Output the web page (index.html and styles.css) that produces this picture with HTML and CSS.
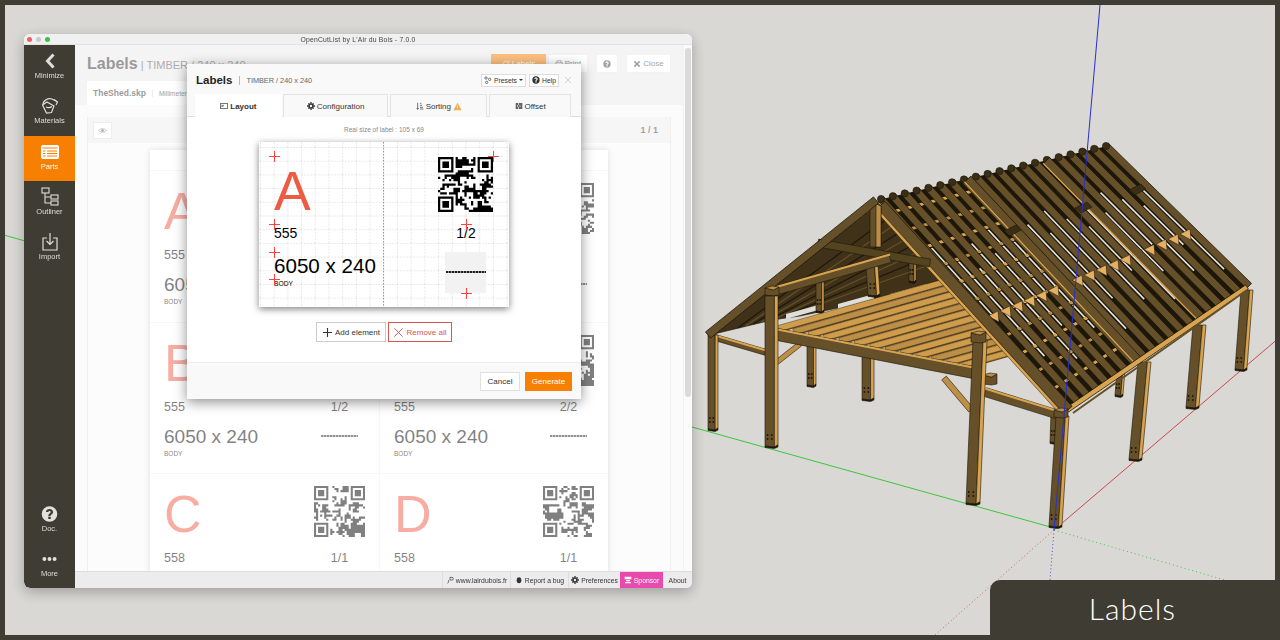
FILE: index.html
```html
<!DOCTYPE html>
<html>
<head>
	<meta charset="utf-8">
	<title>OpenCutList - Labels</title>
	<link rel="stylesheet" href="styles.css">
</head>
<body>
<svg class="sprite" width="0" height="0">
	<symbol id="i-gear" viewBox="0 0 12 12"><path d="M6 1.800a4.200 4.200 0 1 0 0 8.400 4.200 4.200 0 0 0 0-8.400zm0 2.400a1.800 1.800 0 1 1 0 3.600 1.800 1.800 0 0 1 0-3.600z"/><path d="M5 0h2v2.200H5zM5 9.800h2V12H5zM0 5h2.200v2H0zM9.800 5H12v2H9.800zM1.400 2.800l1.400-1.400 1.500 1.500-1.400 1.400zM7.700 9.100l1.400-1.400 1.500 1.500-1.400 1.400zM1.400 9.200l1.500-1.500 1.400 1.400-1.500 1.500zM7.700 2.900l1.500-1.500 1.400 1.400-1.500 1.500z"/></symbol>
	<symbol id="i-help" viewBox="0 0 12 12"><path fill-rule="evenodd" d="M6 .5a5.500 5.500 0 1 0 0 11 5.500 5.500 0 0 0 0-11zM5.100 8h1.800v1.600H5.100zM3.500 4.600C3.500 3.200 4.600 2.400 6 2.400s2.500.8 2.500 2.100c0 1.800-1.700 1.700-1.700 2.900H5.200c0-1.900 1.600-2 1.600-2.900 0-.4-.3-.7-.8-.7s-.8.3-.8.800z"/></symbol>
	<symbol id="i-close" viewBox="0 0 12 12"><path d="M2 2l8 8M10 2l-8 8" fill="none" stroke="currentColor" stroke-width="2.400"/></symbol>
	<symbol id="i-plus" viewBox="0 0 12 12"><path d="M6 1v10M1 6h10" fill="none" stroke="currentColor" stroke-width="1.200"/></symbol>
	<symbol id="i-cross" viewBox="0 0 12 12"><path d="M1.500 1.500l9 9M10.500 1.500l-9 9" fill="none" stroke="currentColor"/></symbol>
</svg>

<div class="stage">
	<svg id="model" class="model" viewBox="0 0 1280 640"></svg>

	<div class="window">
		<div class="titlebar">
			<span class="light red"></span><span class="light grey"></span><span class="light green"></span>
			<span class="title-text">OpenCutList by L'Air du Bois - 7.0.0</span>
		</div>
		<div class="win-body">
			<div class="sidebar">
				<div class="side-btn">
					<svg viewBox="0 0 20 20"><path d="M13.500 3.500l-6 6.500 6 6.500" fill="none" stroke="currentColor" stroke-width="3"/></svg>
					<span>Minimize</span>
				</div>
				<div class="side-btn">
					<svg viewBox="0 0 20 20" fill="none" stroke="currentColor" stroke-width="1.200"><path d="M2.500 9l4.500-3 7 4-2.500 6.500-5 .5z"/><path d="M3 8.500C3 4.500 8 1.500 12 3l4 2"/><path d="M14 3.500L17.500 6l-1.500 3"/><path d="M6 11c2 1 4 1 6-.5"/></svg>
					<span>Materials</span>
				</div>
				<div class="side-btn active">
					<svg viewBox="0 0 20 20"><rect x="1" y="3" width="18" height="14" rx="2" fill="#fff"/><path d="M2.500 6h15M7 9h10M7 11.500h10M7 14h10M3 9h2.500M3 11.500h2.500M3 14h2.500" stroke="#f77f00"/></svg>
					<span>Parts</span>
				</div>
				<div class="side-btn">
					<svg viewBox="0 0 20 20" fill="none" stroke="currentColor" stroke-width="1.100"><rect x="2" y="1" width="7" height="5"/><rect x="11" y="8" width="7" height="4"/><rect x="11" y="14" width="7" height="4"/><path d="M5 6v10h6M5 10h6"/></svg>
					<span>Outliner</span>
				</div>
				<div class="side-btn">
					<svg viewBox="0 0 20 20" fill="none" stroke="currentColor" stroke-width="1.200"><path d="M7 6H3v12h14V6h-4"/><path d="M10 1v11M6.500 9l3.500 3.500L13.500 9"/></svg>
					<span>Import</span>
				</div>
				<div class="side-btn push">
					<svg viewBox="0 0 12 12" class="fill"><use href="#i-help"/></svg>
					<span>Doc.</span>
				</div>
				<div class="side-btn">
					<svg viewBox="0 0 20 20" class="fill"><circle cx="4" cy="10" r="2.300"/><circle cx="10" cy="10" r="2.300"/><circle cx="16" cy="10" r="2.300"/></svg>
					<span>More</span>
				</div>
			</div>

			<div class="right">
				<div class="main">
					<div class="page">
						<div class="head">
							<div class="head-row">
								<div class="head-title"><b>Labels</b> | TIMBER / 240 x 240</div>
								<div class="head-btns">
									<span class="hbtn orange"><svg class="ico line" viewBox="0 0 12 12"><path d="M10 4a4.500 4.500 0 1 0 .5 3M10.500 1v3.500H7"/></svg>Labels</span>
									<span class="hbtn print"><svg class="ico line" viewBox="0 0 12 12"><path d="M3 4V1h6v3M1 4h10v5H9M3 9H1V4M3 7h6v4H3z"/></svg>Print</span>
									<span class="hbtn help gap"><svg class="ico"><use href="#i-help"/></svg></span>
									<span class="hbtn close gap"><svg class="ico"><use href="#i-close"/></svg>Close</span>
								</div>
							</div>
							<div class="file-tab"><b>TheShed.skp</b><i></i><span>Millimeter</span></div>
						</div>
						<div class="panel">
							<div class="panel-bar">
								<span class="eye"><svg viewBox="0 0 12 12"><path d="M1 6c2-3 8-3 10 0-2 3-8 3-10 0z" fill="none" stroke="#555"/><circle cx="6" cy="6" r="1.700" fill="#555"/></svg></span>
								<b>1 / 1</b>
							</div>
							<div class="panel-body">
								<div class="sheet">
									<div class="cell">
										<div class="letter">A</div><svg class="qr" data-seed="11"></svg>
										<div class="num">555</div><div class="frac">1/2</div>
										<div class="size">6050 x 240</div><div class="bar"></div>
										<div class="tag">BODY</div>
									</div>
									<div class="cell">
										<div class="letter">A</div><svg class="qr" data-seed="23"></svg>
										<div class="num">555</div><div class="frac">2/2</div>
										<div class="size">6050 x 240</div><div class="bar"></div>
										<div class="tag">BODY</div>
									</div>
									<div class="cell">
										<div class="letter">B</div><svg class="qr" data-seed="37"></svg>
										<div class="num">555</div><div class="frac">1/2</div>
										<div class="size">6050 x 240</div><div class="bar"></div>
										<div class="tag">BODY</div>
									</div>
									<div class="cell">
										<div class="letter">B</div><svg class="qr" data-seed="41"></svg>
										<div class="num">555</div><div class="frac">2/2</div>
										<div class="size">6050 x 240</div><div class="bar"></div>
										<div class="tag">BODY</div>
									</div>
									<div class="cell">
										<div class="letter">C</div><svg class="qr" data-seed="53"></svg>
										<div class="num">558</div><div class="frac">1/1</div>
									</div>
									<div class="cell">
										<div class="letter">D</div><svg class="qr" data-seed="67"></svg>
										<div class="num">558</div><div class="frac">1/1</div>
									</div>
								</div>
							</div>
						</div>
					</div>
					<div class="scrollbar"><div class="thumb"></div></div>
					<div class="backdrop"></div>

					<div class="modal">
						<div class="modal-head">
							<b>Labels</b><i></i><span class="modal-sub">TIMBER / 240 x 240</span>
							<span class="mbtn presets">
								<svg class="ico line" viewBox="0 0 12 12"><circle cx="3" cy="3" r="1.800"/><circle cx="8.500" cy="5" r="1.800"/><circle cx="4" cy="9.500" r="1.800"/></svg>Presets <em></em>
							</span>
							<span class="mbtn"><svg class="ico"><use href="#i-help"/></svg>Help</span>
							<svg class="modal-x"><use href="#i-cross"/></svg>
						</div>
						<div class="tabs">
							<div class="tab active tab-layout">
								<svg class="ico line" viewBox="0 0 12 12"><rect x=".5" y="2.500" width="11" height="7"/><path d="M2 5h4M2 7h3"/></svg>Layout
							</div>
							<div class="tab tab-config"><svg class="ico"><use href="#i-gear"/></svg>Configuration</div>
							<div class="tab tab-sort">
								<svg class="ico line" viewBox="0 0 12 12"><path d="M2.500 1v10M1 9l1.500 2L4 9M6 2h2M6 5h3M6 8h4.500M6 10.500h5"/></svg>Sorting
								<svg class="warn" viewBox="0 0 12 12"><path d="M6 1l5.500 10H.5z" fill="#f0ad4e"/><path d="M6 4.500v3.500M6 9v1" stroke="#fff"/></svg>
							</div>
							<div class="tab tab-offset">
								<svg class="ico" viewBox="0 0 12 12"><path d="M1 2h4v2.200H1zM6 2h5v2.200H6zM1 5h2.500v2.200H1zM4.500 5h2.500v2.200H4.500zM8 5h3v2.200H8zM1 8h4v2.200H1zM6 8h5v2.200H6z"/></svg>Offset
							</div>
						</div>
						<div class="modal-body">
							<div class="real-size">Real size of label : 105 x 69</div>
							<div class="label">
								<svg class="label-grid" width="250" height="165">
									<defs>
										<pattern id="grid" x="1" y="5" width="13.700" height="13.700" patternUnits="userSpaceOnUse">
											<path d="M.5 0v13.700M0 .5h13.700" fill="none" stroke="#e4e4e4" stroke-dasharray="1.500 1.500"/>
										</pattern>
									</defs>
									<rect width="250" height="165" fill="url(#grid)"/>
									<path d="M124.500 0v165" stroke="#999" stroke-dasharray="1.500 1.500"/>
								</svg>
								<div class="l-box"></div>
								<div class="l-bar"></div>
								<div class="l-letter">A</div>
								<svg class="qr l-qr" data-seed="79"></svg>
								<div class="l-num">555</div>
								<div class="l-frac">1/2</div>
								<div class="l-size">6050 x 240</div>
								<div class="l-tag">BODY</div>
								<i class="cross c1"></i><i class="cross c2"></i><i class="cross c3"></i><i class="cross c4"></i>
								<i class="cross c5"></i><i class="cross c6"></i><i class="cross c7"></i>
							</div>
							<div class="elem-btns">
								<span class="ebtn"><svg class="ico-lg"><use href="#i-plus"/></svg>Add element</span>
								<span class="ebtn danger"><svg class="ico-lg"><use href="#i-cross"/></svg>Remove all</span>
							</div>
						</div>
						<div class="modal-foot">
							<span class="fbtn">Cancel</span>
							<span class="fbtn primary">Generate</span>
						</div>
					</div>
				</div>

				<div class="statusbar">
					<span class="st-item"><svg class="ico line" viewBox="0 0 12 12"><path d="M2 10.500c1.500 0 2-1 2-3V6M6 2h3a1.500 1.500 0 0 1 0 4H6z"/></svg>www.lairdubois.fr</span>
					<span class="st-item"><svg class="ico" viewBox="0 0 12 12"><ellipse cx="6" cy="6.500" rx="3.500" ry="4.500"/></svg>Report a bug</span>
					<span class="st-item"><svg class="ico"><use href="#i-gear"/></svg>Preferences</span>
					<span class="st-item sponsor"><svg class="ico" viewBox="0 0 12 12" fill="#fff"><path d="M1 1h10v4H1zM3 6h6v2H3zM1.500 9h9v2h-9z"/></svg>Sponsor</span>
					<span class="st-item about">About</span>
				</div>
			</div>
		</div>
	</div>

	<div class="badge">Labels</div>
</div>
<script src="page.js"></script>
</body>
</html>
```

FILE: styles.css
```css
* {margin:0; padding:0; box-sizing:border-box;}
body {font-family:"Liberation Sans", Arial, sans-serif; color:#222; background:#3f3c34;}
b {font-weight:bold;}
i, em {font-style:normal;}
.sprite {position:absolute;}

.stage {width:1280px; height:640px; position:relative; overflow:hidden; background:#d9d8d4; border:5px solid #3f3c34;}
.model {position:absolute; left:-5px; top:-5px; width:1280px; height:640px;}
.badge {position:absolute; right:0; bottom:0; width:285px; height:55px; background:#3f3c34; border-top-left-radius:10px; color:#fff; font-family:Lato, sans-serif; font-weight:300; font-size:30px; letter-spacing:1px; display:flex; align-items:center; justify-content:center;}

/* window */
.window {position:absolute; left:19px; top:29px; width:668px; height:554px; display:flex; flex-direction:column; border-radius:6px; overflow:hidden; background:#fff; box-shadow:0 4px 14px rgba(0,0,0,.28); opacity:.999;}
.titlebar {height:11px; flex:none; background:#f1f0f1; display:flex; align-items:center; padding-left:3px; gap:4px; position:relative; border-bottom:1px solid #e2e2e2;}
.light {width:5px; height:5px; border-radius:50%;}
.light.red {background:#f2605a;}
.light.grey {background:#c9c9c9;}
.light.green {background:#2fc64a;}
.title-text {position:absolute; left:0; right:0; text-align:center; font-size:6.800px; color:#444; letter-spacing:.2px;}
.win-body {flex:1; display:flex; min-height:0;}

.sidebar {width:51px; flex:none; background:#3f3c34; display:flex; flex-direction:column; border-bottom-left-radius:6px;}
.side-btn {height:45px; flex:none; padding-top:6px; display:flex; flex-direction:column; align-items:center; color:#dfddd8; font-size:7.500px; line-height:10px;}
.side-btn svg {width:20px; height:20px;}
.side-btn svg.fill {fill:#e3e1dc; width:17px; height:20px;}
.side-btn.active {background:#f77f00; color:#fff;}
.side-btn:nth-child(3) {margin-top:1px;}
.side-btn.push {margin-top:auto;}

.right {flex:1; min-width:0; display:flex; flex-direction:column;}
.main {flex:1; min-height:0; display:flex; position:relative; overflow:hidden;}
.page {flex:1; min-width:0; background:#f7f7f7; display:flex; flex-direction:column;}
.scrollbar {width:9px; flex:none; background:#f6f6f6; border-left:1px solid #e2e2e2; padding:3px 1px;}
.thumb {height:349px; background:#b5b5b5; border-radius:4px;}
.backdrop {position:absolute; left:0; top:0; right:0; bottom:0; background:rgba(255,255,255,.5);}

.head {height:60px; flex:none; background:#ebe8e8; padding:9px 12px 0;}
.head-row {display:flex; justify-content:space-between; height:19px; align-items:center;}
.head-title {font-size:11px; color:#555; white-space:nowrap;}
.head-title b {font-size:16px; color:#333;}
.head-btns {display:flex;}
.hbtn {height:19px; background:#fff; border:1px solid #e4e4e4; font-size:8px; color:#444; display:flex; align-items:center; justify-content:center; gap:2px; margin-left:2px;}
.hbtn.orange {width:55px; background:#f77f00; border-color:#f77f00; color:#fff;}
.hbtn.print {width:40px;}
.hbtn.help {width:22px;}
.hbtn.close {width:45px;}
.hbtn.gap {margin-left:8px;}
.ico {width:8px; height:8px; fill:currentColor; flex:none;}
.ico.line {fill:none; stroke:currentColor;}
.ico-lg {width:11px; height:11px; flex:none;}
.file-tab {height:24px; margin-top:8px; width:240px; background:#fff; display:flex; align-items:center; padding-left:6px;}
.file-tab b {font-size:8.500px; color:#333;}
.file-tab i {width:1px; height:8px; background:#ddd; margin:0 6px;}
.file-tab span {font-size:6.500px; color:#333;}

.panel {flex:1; min-height:0; margin:12px 12px 0; display:flex; flex-direction:column; border-left:1px solid #dedede; border-right:1px solid #dedede;}
.panel-bar {height:26px; flex:none; background:#ececec; display:flex; align-items:center; justify-content:space-between; padding:0 12px 0 5px; font-size:9px; color:#444;}
.eye {width:19px; height:17px; background:#fff; border:1px solid #dcdcdc; display:flex; align-items:center; justify-content:center;}
.eye svg {width:9px; height:9px;}
.panel-body {flex:1; min-height:0; overflow:hidden; display:flex; justify-content:center; padding-top:7px; background:#f9f9f9;}
.sheet {width:458px; height:600px; background:#fff; padding-top:20px; box-shadow:0 0 6px rgba(0,0,0,.25); display:grid; grid-template-columns:230px 228px; grid-auto-rows:151.500px;}
.cell {border-top:1px solid #eee; padding:12px 14px 0; display:grid; grid-template-columns:1fr 51px; grid-template-rows:51px 29px 35px 10px; color:#000; align-content:start;}
.cell:nth-child(odd) {border-right:1px solid #eee;}
.letter {font-size:52px; line-height:51px; color:#ee5b45; align-self:end; position:relative; top:3px;}
.qr {width:51px; height:51px; fill:currentColor; display:block;}
.num {font-size:12.500px; line-height:16px; margin-top:13px;}
.frac {font-size:12.500px; line-height:16px; margin-top:13px; text-align:center;}
.size {font-size:19px; line-height:26px; margin-top:9px; white-space:nowrap;}
.bar {height:2px; width:37px; margin:20px 0 0 7px; background:repeating-linear-gradient(90deg,#222 0 2px,#999 2px 3px);}
.tag {font-size:6.500px; line-height:8px; grid-column:1 / 3;}

/* modal */
.modal {position:absolute; left:112px; top:19px; width:394px; height:335px; background:#fff; display:flex; flex-direction:column; box-shadow:0 3px 12px rgba(0,0,0,.45);}
.modal-head {height:30px; flex:none; background:#f9f9f9; display:flex; align-items:center; padding:2px 9px 0; font-size:6.800px; color:#333;}
.modal-head b {font-size:11.500px; color:#222;}
.modal-head i {width:1px; height:9px; background:#bbb; margin:0 6px 0 7px;}
.modal-sub {font-size:7.300px; color:#666; margin-right:auto;}
.mbtn {height:13px; background:#fff; border:1px solid #ddd; display:flex; align-items:center; gap:2px; padding:0 2px; margin-left:3px;}
.mbtn em {width:0; height:0; border:2.500px solid transparent; border-top-color:#333; border-bottom:0;}
.modal-x {width:8px; height:8px; color:#bbb; margin-left:5px;}
.tabs {height:23px; flex:none; background:#f9f9f9; display:flex; padding:0 10px 0 8px; gap:1px; border-bottom:1px solid #ddd;}
.tab {height:23px; background:#f9f9f9; border:1px solid #e4e4e4; border-bottom:0; font-size:8px; color:#333; display:flex; align-items:center; justify-content:center; gap:2px;}
.tab.active {background:#fff; font-weight:bold; height:24px; border:0;}
.tab-layout {width:87px;}
.tab-config {width:106px;}
.tab-sort {width:97px; margin-left:1px;}
.tab-offset {width:82px; margin-left:1px;}
.warn {width:9px; height:9px;}
.modal-body {flex:1; padding-top:8px; display:flex; flex-direction:column; align-items:center;}
.real-size {font-size:6.500px; line-height:10px; color:#888;}
.label {width:250px; height:165px; margin-top:7px; background:#fff; position:relative; box-shadow:0 2px 7px rgba(0,0,0,.5);}
.label-grid {position:absolute; left:0; top:0;}
.l-box {position:absolute; left:186px; top:110px; width:41px; height:41px; background:#f2f2f2;}
.l-bar {position:absolute; left:187px; top:129px; width:40px; height:2px; background:repeating-linear-gradient(90deg,#222 0 2px,#888 2px 3px);}
.l-letter {position:absolute; left:15px; top:19px; font-size:55px; line-height:60px; color:#ee5b45;}
.l-qr {position:absolute; left:179px; top:15px; width:55px; height:55px; color:#000;}
.l-num {position:absolute; left:15px; top:83px; font-size:14px; line-height:16px; color:#000;}
.l-frac {position:absolute; left:187px; width:40px; text-align:center; top:83px; font-size:14px; line-height:16px; color:#000;}
.l-size {position:absolute; left:15px; top:111px; font-size:20.600px; line-height:26px; color:#000; white-space:nowrap;}
.l-tag {position:absolute; left:15px; top:138px; font-size:6.700px; line-height:8px; color:#000;}
.cross {position:absolute; width:11px; height:11px; background:linear-gradient(#f44,#f44) center/100% 1px no-repeat, linear-gradient(#f44,#f44) center/1px 100% no-repeat;}
.c1 {left:10px; top:9px;}
.c2 {left:10px; top:77px;}
.c3 {left:10px; top:105px;}
.c4 {left:10px; top:132px;}
.c5 {left:229px; top:9px;}
.c6 {left:202px; top:77px;}
.c7 {left:202px; top:146px;}
.elem-btns {margin-top:15px; display:flex; gap:2px;}
.ebtn {height:20px; width:70px; border:1px solid #ccc; background:#fff; font-size:8px; display:flex; align-items:center; justify-content:center; gap:2px; color:#333;}
.ebtn.danger {width:64px; border-color:#d9534f; color:#d9534f;}
.modal-foot {height:37px; flex:none; background:#f9f9f9; border-top:1px solid #eee; display:flex; justify-content:flex-end; align-items:center; padding:0 9px 0 0; gap:5px;}
.fbtn {height:19px; width:40px; background:#fff; border:1px solid #e0e0e0; font-size:8px; color:#333; display:flex; align-items:center; justify-content:center;}
.fbtn.primary {width:47px; background:#f77f00; border-color:#f77f00; color:#fff;}

/* status bar */
.statusbar {height:17px; flex:none; background:#ececec; border-top:1px solid #ddd; display:flex; justify-content:flex-end; font-size:6.800px; color:#333;}
.st-item {display:flex; align-items:center; justify-content:center; gap:2px; border-left:1px solid #ddd;}
.st-item:nth-child(1) {width:68px;}
.st-item:nth-child(2) {width:58px;}
.st-item:nth-child(3) {width:52px;}
.st-item.sponsor {width:43px; background:#e84aad; color:#fff; border:0;}
.st-item.about {width:29px; border:0;}
```

FILE: page.js
```js
// qr codes: finder squares + seeded noise
function fillQr(svg) {
	var n = 25, seed = +svg.dataset.seed, d = "", grid = [];
	function rnd() {
		seed = (seed * 1103515245 + 12345) & 0x7fffffff;
		return (seed >> 12) & 1;
	}
	function finder(x, y, i, j) {
		var a = i - x, b = j - y;
		if (a < -1 || b < -1 || a > 7 || b > 7) return -1;
		if (a < 0 || b < 0 || a > 6 || b > 6) return 0;
		if (a == 0 || b == 0 || a == 6 || b == 6) return 1;
		if (a == 1 || b == 1 || a == 5 || b == 5) return 0;
		return 1;
	}
	for (var j = 0; j < n; j++) {
		for (var i = 0; i < n; i++) {
			var v = finder(0, 0, i, j);
			if (v < 0) v = finder(18, 0, i, j);
			if (v < 0) v = finder(0, 18, i, j);
			if (v < 0) {
				// clump the modules a bit, left or above
				if (rnd() && i > 0 && j > 0) v = rnd() ? grid[j * n + i - 1] : grid[(j - 1) * n + i];
				else v = rnd();
			}
			grid[j * n + i] = v;
			if (v) d += "M" + i + " " + j + "h1.02v1.02h-1.02z";
		}
	}
	svg.setAttribute("viewBox", "0 0 25 25");
	svg.innerHTML = '<path d="' + d + '"/>';
}
Array.from(document.querySelectorAll(".qr")).forEach(fillQr);

// timber frame, coordinates are page pixels
var out = "";
var BROWN = "#655029", DARK = "#1d170a", ORANGE = "#d9a450", MID = "#bd8e45", SHADE = "#3f3219";

function lerp(a, b, t) { return [a[0] + (b[0] - a[0]) * t, a[1] + (b[1] - a[1]) * t]; }
function poly(pts, fill, sw) {
	out += '<polygon points="' + pts.map(function (p) { return p[0].toFixed(1) + "," + p[1].toFixed(1); }).join(" ") +
		'" fill="' + fill + '" stroke="' + DARK + '" stroke-width="' + (sw === undefined ? 0.6 : sw) + '"/>';
}
function band(a, b, w, fill, sw) {
	var dx = b[0] - a[0], dy = b[1] - a[1], l = Math.sqrt(dx * dx + dy * dy);
	var nx = -dy / l * w / 2, ny = dx / l * w / 2;
	poly([[a[0] + nx, a[1] + ny], [b[0] + nx, b[1] + ny], [b[0] - nx, b[1] - ny], [a[0] - nx, a[1] - ny]], fill, sw);
}
function line(a, b, color, w, dash) {
	out += '<line x1="' + a[0] + '" y1="' + a[1] + '" x2="' + b[0] + '" y2="' + b[1] + '" stroke="' + color +
		'" stroke-width="' + w + '"' + (dash ? ' stroke-dasharray="' + dash + '"' : "") + "/>";
}
function post(x1, y1, x2, y2, w) {
	var s = w * 0.72;
	poly([[x1, y1], [x1 + s, y1], [x2 + s, y2], [x2, y2 - 1]], BROWN);
	poly([[x1 + s, y1], [x1 + w, y1], [x2 + w, y2 - 2], [x2 + s, y2]], ORANGE);
	poly([[x2, y2 - 1], [x2 + s, y2], [x2 + w, y2 - 2], [x2 + w, y2], [x2 + s, y2 + 1.5], [x2, y2 + 0.5]], DARK);
	[[1.5, -12], [4, -12], [1.5, -8], [4, -8]].forEach(function (h) {
		out += '<circle cx="' + (x2 + h[0] * s / 5.5) + '" cy="' + (y2 + h[1]) + '" r=".9" fill="' + DARK + '"/>';
	});
}
function beam(a, b, w, lit) {
	band(a, b, w, BROWN);
	band([a[0], a[1] - w / 2 + 1], [b[0], b[1] - w / 2 + 1], 2, lit || ORANGE, 0);
}
function block(x, y, w, h) {
	poly([[x, y + 2], [x + w * 0.6, y + 4], [x + w, y + 1], [x + w, y + h - 1], [x + w * 0.6, y + h], [x, y + h - 1]], BROWN);
	poly([[x, y + 2], [x + w * 0.5, y], [x + w, y + 1], [x + w * 0.6, y + 4]], MID);
}

// axes
line([0, 234], [1054, 528], "#3cc63c", 1);
line([1054, 530], [1280, 337], "#cc4a4c", 1);
line([1054, 530], [935, 635], "#c76a6a", 1, "1 2.5");
line([1054, 530], [1228, 581], "#43c443", 1, "1 3");
line([1054, 530], [1050, 580], "#4a50d0", 1, "1 2.5");

// back posts
post(1241, 290, 1235, 370, 12);
post(1193, 325, 1186, 408, 13);
post(1138, 362, 1129, 460, 13);
post(1117, 370, 1115, 396, 8);
post(1051, 412, 1050, 443, 8);
post(807, 340, 807, 386, 9);
post(862, 352, 862, 400, 12);

// left low beam, outer post and brace
beam([710, 336], [768, 353], 6);
post(708, 335, 708, 430, 10);
band([772, 366], [800, 344], 5, MID);

// gable underside
poly([[878, 204], [714, 334], [772, 320], [800, 316], [960, 282], [952, 262]], SHADE);
for (var k = 1; k < 9; k++) {
	var q = k / 9;
	var g1 = lerp([878, 214], [945, 268], q), g2 = lerp([730, 330], [800, 312], q);
	line(g1, g2, k % 2 ? DARK : BROWN, 1.2);
}
// light slits under the tie
for (k = 0; k < 3; k++) {
	var gx = 786 + k * 52;
	poly([[gx, 314 - k * 10], [gx + 36, 304 - k * 10], [gx + 36, 309 - k * 10], [gx, 319 - k * 10]], "#dfdfdb", 0);
}
post(816, 282, 816, 312, 8);
post(866, 266, 868, 296, 12);
post(909, 262, 909, 282, 7);

// attic floor joists
for (k = 0; k < 13; k++) {
	var ja = lerp([775, 328], [975, 368], (k + 0.2) / 13);
	var jb = [ja[0] + 200, ja[1] - 56];
	band([ja[0], ja[1] + 3], [jb[0], jb[1] + 3], 2.5, "#6a4f22", 0);
	band(ja, jb, 6, k % 3 == 1 ? MID : "#cf9c4c", 0.4);
}

// right slope
var P = [878, 200], Q = [1103, 147], R = [1247, 287], S = [1067, 410];
poly([P, Q, R, S], DARK, 0);
var N = 19;
for (k = 0; k < N; k++) {
	var tm = (k + 0.72) / N;
	var u1 = 0.24 + ((k * 7) % 5) * 0.035, u2 = 0.58 + ((k * 3) % 5) * 0.07;
	var s1 = lerp(lerp(P, Q, tm), lerp(S, R, tm), u1);
	var s2 = lerp(lerp(P, Q, tm), lerp(S, R, tm), u2);
	line(s1, s2, "#e4e4e0", 1.6);
}
// ladder of purlins seen through the gaps, near the front
for (var u = 0.06; u < 0.96; u += 0.085) {
	var la = lerp(P, S, u), lb = lerp(lerp(P, Q, 0.42), lerp(S, R, 0.42), u);
	line(la, lb, u % 0.17 < 0.085 ? ORANGE : MID, 3);
	line([la[0], la[1] + 2.500], [lb[0], lb[1] + 2.500], DARK, 1);
}
for (k = 0; k <= N; k++) {
	var t1 = k / N;
	var rt = lerp(P, Q, t1), rb = lerp(S, R, t1);
	band([rt[0] + 3, rt[1] - 1], [rb[0] + 2, rb[1] - 1], 7.2, BROWN, 0.8);
	out += '<circle cx="' + (rt[0] + 3) + '" cy="' + (rt[1] - 1) + '" r="3.600" fill="#3a2e17" stroke="' + DARK + '" stroke-width=".6"/>';
}
// orange wedges on the wall plate
for (k = 0; k < 17; k++) {
	var w = lerp([993, 315], [1185, 233], k / 16);
	poly([[w[0] - 5, w[1] + 1], [w[0] + 5, w[1] - 4], [w[0] + 6, w[1] + 7]], "#e6b063", 0.5);
}
// principal rafters of the inner trusses
[0.4, 0.75].forEach(function (t) {
	var a = lerp(P, Q, t), b = lerp(S, R, t);
	band(a, b, 8, BROWN, 0.8);
	band([a[0] - 3.500, a[1] + 3], [b[0] - 3.500, b[1] + 3], 1.5, ORANGE, 0);
});
[[1137, 187], [1083, 205], [1012, 228]].forEach(function (c) {
	poly([[c[0] - 8, c[1] + 3], [c[0] + 4, c[1] - 3], [c[0] + 9, c[1] + 2], [c[0] - 2, c[1] + 8]], "#3a2e17", 0.6);
});

// eave and front truss
band(S, R, 5, ORANGE, 0.8);
band([S[0] + 6, S[1] + 3], [R[0], R[1] + 3], 2, BROWN, 0);
band([881, 205], [1068, 410], 11, BROWN, 0.8);
band([875, 208], [1060, 412], 3, ORANGE, 0.5);

band([818, 243], [930, 263], 8, "#54431f");
poly([[870, 206], [877, 202], [881, 206], [881, 247], [870, 247]], BROWN);
poly([[876, 204], [881, 206], [881, 247], [876, 247]], MID);
beam([771, 292], [890, 258], 9);
band([876, 200], [708, 335], 8, BROWN, 0.8);
block(765, 286, 14, 10);

// front side
beam([775, 334], [976, 373], 12);
post(765, 296, 765, 447, 13);
band([944, 378], [971, 410], 6, MID);
block(983, 373, 14, 12);
beam([985, 392], [1062, 416], 9);
post(973, 340, 966, 504, 14);
block(971, 331, 15, 12);
post(1056, 416, 1049, 527, 13);
block(1054, 408, 14, 10);

// blue axis runs over the model
line([1054, 530], [1100, 5], "#2730cc", 1);

document.getElementById("model").innerHTML = out;
```
